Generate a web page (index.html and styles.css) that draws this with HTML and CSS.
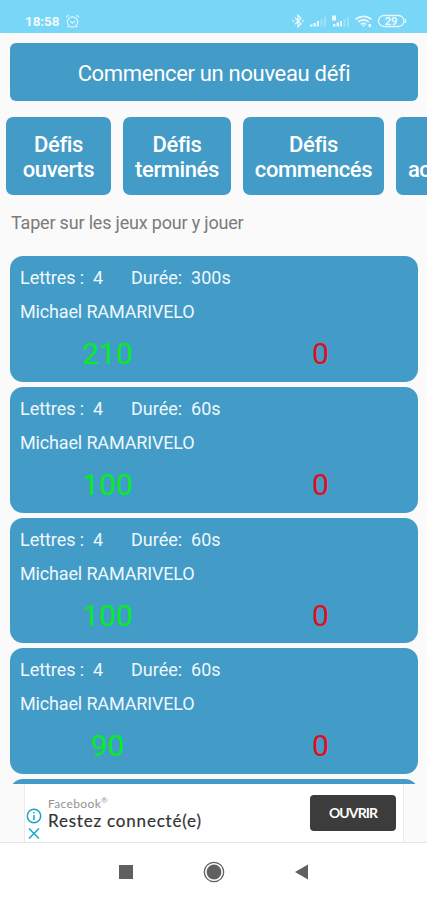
FILE: index.html
```html
<!DOCTYPE html>
<html lang="fr">
<head>
    <meta charset="UTF-8">
    <meta name="viewport" content="width=device-width, initial-scale=1.0">
    <title>Défis</title>
    <link rel="stylesheet" href="styles.css">
</head>
<body>
    <div class="screen">
        <div class="status-bar">
            <span class="clock">18:58</span>
            <svg class="alarm" width="15" height="15" viewBox="0 0 15 15">
                <circle cx="7.5" cy="8" r="5.2"/>
                <path d="M1 3.2 3.4 1.2M14 3.2 11.6 1.2M5.2 7.2 7.4 9 10 7.2M3.6 12 2.6 13.4M11.4 12l1 1.4"/>
            </svg>
            <svg class="status-icons" width="116" height="16" viewBox="0 0 116 16">
                <path class="line" d="M3 4.8 9 10.8 6 13.8V2.2L9 5.2 3 11.2M.6 8h1.6M10 8h1.6"/>
                <path class="solid" d="M18 13.5v-2h2.5v2zM21.5 13.5v-3.5H24v3.5zM25 13.5V8h2v5.5z"/>
                <path class="faint" d="M28.5 13.5V6h2v7.5zM32 13.5V4h2v9.5z"/>
                <path class="solid" d="M40 2.5h4v5h-4zM41 13.5V11h2.5v2.5zM44.5 13.5V9.5H47v4zM48 13.5V8h2v5.5z"/>
                <path class="faint" d="M51.5 13.5V6h2v7.5zM55 13.5V4h2v9.5z"/>
                <path class="wifi" d="M63.5 6.2q8-5.8 16 0M66.2 8.9q5.3-4 10.6 0M68.8 11.4q2.7-2 5.4 0"/>
                <path class="solid" d="M70 12.2h3L71.5 14zM76.5 11h2.5v3h-2.5z"/>
                <rect class="line" x="86.5" y="2.5" width="25.5" height="11" rx="5.5"/>
                <path class="line" d="M113.5 6v4"/>
                <text x="99" y="12" text-anchor="middle">29</text>
            </svg>
        </div>

        <div class="content">
            <button class="new-btn">Commencer un nouveau défi</button>

            <div class="tabs">
                <button class="tab tab-open">Défis<br>ouverts</button>
                <button class="tab tab-done">Défis<br>terminés</button>
                <button class="tab tab-started">Défis<br>commencés</button>
                <button class="tab tab-accepted">Défis<br>acceptés</button>
            </div>

            <p class="hint">Taper sur les jeux pour y jouer</p>

            <div class="games">
                <div class="game">
                    <div class="game-info"><span class="letters">Lettres :&nbsp; 4</span><span>Durée:&nbsp; 300s</span></div>
                    <div class="player">Michael RAMARIVELO</div>
                    <div class="scores"><span class="win">210</span><span class="lose">0</span></div>
                </div>
                <div class="game">
                    <div class="game-info"><span class="letters">Lettres :&nbsp; 4</span><span>Durée:&nbsp; 60s</span></div>
                    <div class="player">Michael RAMARIVELO</div>
                    <div class="scores"><span class="win">100</span><span class="lose">0</span></div>
                </div>
                <div class="game">
                    <div class="game-info"><span class="letters">Lettres :&nbsp; 4</span><span>Durée:&nbsp; 60s</span></div>
                    <div class="player">Michael RAMARIVELO</div>
                    <div class="scores"><span class="win">100</span><span class="lose">0</span></div>
                </div>
                <div class="game">
                    <div class="game-info"><span class="letters">Lettres :&nbsp; 4</span><span>Durée:&nbsp; 60s</span></div>
                    <div class="player">Michael RAMARIVELO</div>
                    <div class="scores"><span class="win">90</span><span class="lose">0</span></div>
                </div>
                <div class="game"></div>
            </div>
        </div>

        <div class="ad-zone">
            <div class="ad">
                <svg class="ad-icons" width="16" height="34" viewBox="0 0 16 34">
                    <circle cx="8" cy="8" r="6.7"/>
                    <path d="M8 7v5M8 4v1.6M3 20.5 13 30.5M13 20.5 3 30.5"/>
                </svg>
                <div class="ad-text">
                    <span class="ad-brand">Facebook<sup>®</sup></span>
                    <span class="ad-title">Restez connecté(e)</span>
                </div>
                <button class="ad-btn">OUVRIR</button>
            </div>
        </div>

        <div class="nav-bar">
            <svg width="24" height="24" viewBox="0 0 24 24"><rect x="5" y="5" width="14" height="14"/></svg>
            <svg width="24" height="24" viewBox="0 0 24 24"><circle class="ring" cx="12" cy="12" r="9.7"/><circle cx="12" cy="12" r="7.4"/></svg>
            <svg width="24" height="24" viewBox="0 0 24 24"><path d="M5 12 18 4.5v15z"/></svg>
        </div>
    </div>
</body>
</html>
```
FILE: styles.css
```css
* {
    margin: 0;
    padding: 0;
    box-sizing: border-box;
}

body {
    font-family: Roboto, "Liberation Sans", sans-serif;
    background: #fafafa;
}

button {
    font-family: inherit;
    border: none;
    color: white;
    background: #439bc7;
}

.screen {
    width: 427px;
    height: 900px;
    display: flex;
    flex-direction: column;
    overflow: hidden;
}

.status-bar {
    flex: none;
    height: 33px;
    padding: 9px 19px 0 25px;
    display: flex;
    align-items: center;
    background: #78d6f7;
    color: white;
}

.clock {
    font-size: 13.5px;
    font-weight: 700;
    letter-spacing: -0.1px;
    opacity: 0.9;
}

.alarm {
    margin-left: 6px;
    fill: none;
    stroke: #dcf6ff;
    stroke-width: 1.2;
}

.status-icons {
    margin-left: auto;
    opacity: 0.85;
}

.status-icons .line,
.status-icons .wifi {
    fill: none;
    stroke: white;
    stroke-width: 1.3;
}

.status-icons .wifi {
    stroke-width: 1.8;
}

.status-icons .solid {
    fill: white;
}

.status-icons .faint {
    fill: white;
    opacity: 0.35;
}

.status-icons text {
    fill: white;
    font-size: 11px;
    font-weight: 700;
}

.content {
    height: 751px;
    flex: none;
    padding: 10px 9px 0 10px;
    display: flex;
    flex-direction: column;
    overflow: hidden;
}

.new-btn {
    flex: none;
    height: 58px;
    padding-top: 2px;
    border-radius: 6px;
    font-size: 22px;
    letter-spacing: -0.32px;
}

.tabs {
    flex: none;
    width: 520px;
    margin: 16px 0 0 -4px;
    display: flex;
    gap: 12px;
}

.tab {
    height: 78px;
    padding-top: 2px;
    border-radius: 7px;
    font-size: 22px;
    font-weight: 500;
    line-height: 25px;
    letter-spacing: -0.4px;
}

.tab-open {
    width: 105px;
}

.tab-done {
    width: 108px;
}

.tab-started {
    width: 141px;
}

.tab-accepted {
    width: 110px;
}

.hint {
    margin: 17px 0 0 1px;
    font-size: 18px;
    line-height: 22px;
    letter-spacing: -0.19px;
    color: #7b7b7b;
}

.games {
    margin-top: 22px;
    display: flex;
    flex-direction: column;
    gap: 5px;
}

.game {
    flex: none;
    height: 125.8px;
    padding: 10px 10px 0;
    border-radius: 13px;
    background: #439bc7;
    color: #eef8fd;
    font-size: 18px;
}

.game-info {
    display: flex;
    line-height: 24px;
}

.letters {
    width: 111px;
    letter-spacing: -0.05px;
}

.player {
    margin-top: 10px;
    line-height: 24px;
    letter-spacing: -0.15px;
}

.scores {
    margin: 2px -10px 0;
    display: flex;
    justify-content: space-between;
    font-size: 30px;
    line-height: 56px;
    text-align: center;
}

.win {
    width: 195px;
    color: #05ee22;
}

.lose {
    width: 195px;
    color: #e00d1d;
}

.ad-zone {
    flex: none;
    height: 59px;
    padding-left: 24px;
    border-bottom: 1px solid #e4e4e4;
}

.ad {
    width: 380px;
    height: 58px;
    padding: 0 7px 0 1px;
    border: 1px solid #ececec;
    border-width: 0 1px;
    background: white;
    display: flex;
    align-items: center;
}

.ad-icons {
    margin-top: 23px;
    fill: none;
    stroke: #16a5cb;
    stroke-width: 1.5;
}

.ad-text {
    margin-left: 6px;
    display: flex;
    flex-direction: column;
    font-family: Lato, sans-serif;
}

.ad-brand {
    font-size: 12px;
    line-height: 15px;
    letter-spacing: 0.35px;
    color: #929292;
}

.ad-brand sup {
    font-size: 8px;
    line-height: 0;
}

.ad-title {
    font-size: 17px;
    line-height: 20px;
    letter-spacing: 0.8px;
    color: #333;
    -webkit-text-stroke: 0.2px #333;
}

.ad-btn {
    width: 86px;
    height: 36px;
    margin-left: auto;
    padding-bottom: 2px;
    border-radius: 4px;
    background: #3c3c3c;
    font-family: Lato, sans-serif;
    font-size: 14px;
    font-weight: 700;
    letter-spacing: -0.9px;
}

.nav-bar {
    flex: 1;
    display: flex;
    justify-content: center;
    align-items: center;
    gap: 64px;
    background: white;
    fill: #606060;
}

.ring {
    fill: none;
    stroke: #606060;
    stroke-width: 1.3;
}
```
